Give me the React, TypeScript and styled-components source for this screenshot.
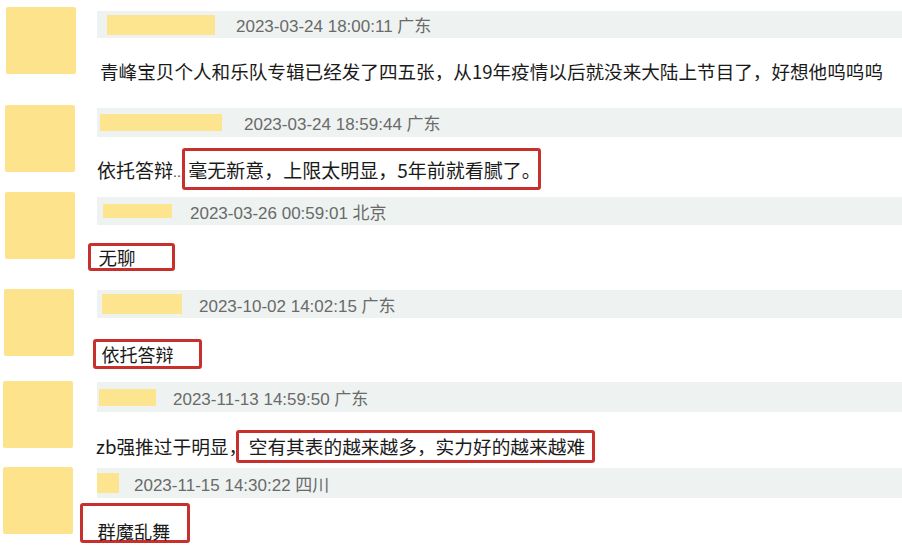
import styled, { createGlobalStyle } from "styled-components";

interface Mark {
  width: number;
  offset: number;
  padLeft: number;
  align?: "center" | "flex-end";
}

interface CommentItem {
  id: number;
  height: number;
  avatarX: number;
  avatarY: number;
  barTop: number;
  barHeight: number;
  nameX: number;
  nameWidth: number;
  nameHeight: number;
  timeGap: number;
  time: string;
  gap: number;
  lineHeight: number;
  indent: number;
  size: number;
  prefix?: string;
  dots?: boolean;
  text: string;
  mark?: Mark;
}

const comments: CommentItem[] = [
  {
    id: 1,
    height: 95,
    avatarX: 6,
    avatarY: 7,
    barTop: 11,
    barHeight: 27,
    nameX: 10,
    nameWidth: 108,
    nameHeight: 20,
    timeGap: 21,
    time: "2023-03-24 18:00:11 广东",
    gap: 18,
    lineHeight: 30,
    indent: 23,
    size: 18.6,
    text: "青峰宝贝个人和乐队专辑已经发了四五张，从19年疫情以后就没来大陆上节目了，好想他呜呜呜",
  },
  {
    id: 2,
    height: 93,
    avatarX: 5,
    avatarY: 10,
    barTop: 13,
    barHeight: 29,
    nameX: 3,
    nameWidth: 122,
    nameHeight: 17,
    timeGap: 22,
    time: "2023-03-24 18:59:44 广东",
    gap: 11,
    lineHeight: 42,
    indent: 20,
    size: 19,
    prefix: "依托答辩",
    dots: true,
    text: "毫无新意，上限太明显，5年前就看腻了。",
    mark: { width: 359, offset: -3, padLeft: 3.5 },
  },
  {
    id: 3,
    height: 97,
    avatarX: 5,
    avatarY: 4,
    barTop: 9,
    barHeight: 28,
    nameX: 6,
    nameWidth: 69,
    nameHeight: 14,
    timeGap: 18,
    time: "2023-03-26 00:59:01 北京",
    gap: 18,
    lineHeight: 28,
    indent: 11,
    size: 18.5,
    text: "无聊",
    mark: { width: 87, offset: 0, padLeft: 7.5 },
  },
  {
    id: 4,
    height: 90,
    avatarX: 4,
    avatarY: 4,
    barTop: 5,
    barHeight: 28,
    nameX: 5,
    nameWidth: 80,
    nameHeight: 20,
    timeGap: 17,
    time: "2023-10-02 14:02:15 广东",
    gap: 21,
    lineHeight: 30,
    indent: 16,
    size: 18,
    text: "依托答辩",
    mark: { width: 109, offset: 0, padLeft: 5.5 },
  },
  {
    id: 5,
    height: 87,
    avatarX: 3,
    avatarY: 6,
    barTop: 7,
    barHeight: 30,
    nameX: 2,
    nameWidth: 57,
    nameHeight: 17,
    timeGap: 17,
    time: "2023-11-13 14:59:50 广东",
    gap: 18,
    lineHeight: 33,
    indent: 19,
    size: 18.7,
    prefix: "zb强推过于明显，",
    text: "空有其表的越来越多，实力好的越来越难",
    mark: { width: 359, offset: -11, padLeft: 9.5 },
  },
  {
    id: 6,
    height: 84,
    avatarX: 3,
    avatarY: 5,
    barTop: 6,
    barHeight: 30,
    nameX: 0,
    nameWidth: 22,
    nameHeight: 20,
    timeGap: 15,
    time: "2023-11-15 14:30:22 四川",
    gap: 5,
    lineHeight: 40,
    indent: 3,
    size: 18.2,
    text: "群魔乱舞",
    mark: { width: 110, offset: 0, padLeft: 14.5, align: "flex-end" },
  },
];

export default function App() {
  return (
    <>
      <GlobalStyle />
      <List>
        {comments.map((c) => (
          <Row key={c.id} $height={c.height}>
            <AvatarCol>
              <Avatar $x={c.avatarX} $y={c.avatarY} />
            </AvatarCol>
            <Body $top={c.barTop}>
              <Bar $height={c.barHeight} $pad={c.nameX}>
                <NameBlock $width={c.nameWidth} $height={c.nameHeight} />
                <Time $gap={c.timeGap}>{c.time}</Time>
              </Bar>
              <CommentLine
                $gap={c.gap}
                $height={c.lineHeight}
                $indent={c.indent}
                $size={c.size}
              >
                {c.prefix && <span>{c.prefix}</span>}
                {c.dots && <Dots>...</Dots>}
                {c.mark ? (
                  <Highlight
                    $width={c.mark.width}
                    $offset={c.mark.offset}
                    $padLeft={c.mark.padLeft}
                    $align={c.mark.align || "center"}
                  >
                    <span>{c.text}</span>
                  </Highlight>
                ) : (
                  <span>{c.text}</span>
                )}
              </CommentLine>
            </Body>
          </Row>
        ))}
      </List>
    </>
  );
}

const GlobalStyle = createGlobalStyle`
  html, body {
    margin: 0;
    padding: 0;
    background: #ffffff;
  }

  #root {
    width: 902px;
    height: 546px;
    overflow: hidden;
  }
`;

const List = styled.div`
  display: flex;
  flex-direction: column;
  width: 902px;
  background: #ffffff;
`;

const Row = styled.div<{ $height: number }>`
  display: flex;
  height: ${(p) => p.$height}px;
  flex-shrink: 0;
`;

const AvatarCol = styled.div`
  width: 77px;
  flex-shrink: 0;
`;

const Avatar = styled.div<{ $x: number; $y: number }>`
  width: 70px;
  height: 67px;
  margin-left: ${(p) => p.$x}px;
  margin-top: ${(p) => p.$y}px;
  background: #fde38b;
  border-radius: 2px;
`;

const Body = styled.div<{ $top: number }>`
  flex: 1;
  display: flex;
  flex-direction: column;
  padding-top: ${(p) => p.$top}px;
  min-width: 0;
`;

const Bar = styled.div<{ $height: number; $pad: number }>`
  display: flex;
  align-items: center;
  height: ${(p) => p.$height}px;
  margin-left: 20px;
  padding-left: ${(p) => p.$pad}px;
  background: #eef2f1;
  flex-shrink: 0;
`;

const NameBlock = styled.div<{ $width: number; $height: number }>`
  width: ${(p) => p.$width}px;
  height: ${(p) => p.$height}px;
  background: #fde48e;
  flex-shrink: 0;
`;

const Time = styled.span<{ $gap: number }>`
  margin-left: ${(p) => p.$gap}px;
  font-family: "Liberation Sans", "Noto Sans CJK SC", sans-serif;
  font-size: 17px;
  color: #6a6a6a;
  white-space: nowrap;
`;

const CommentLine = styled.div<{
  $gap: number;
  $height: number;
  $indent: number;
  $size: number;
}>`
  display: flex;
  align-items: center;
  height: ${(p) => p.$height}px;
  margin-top: ${(p) => p.$gap}px;
  padding-left: ${(p) => p.$indent}px;
  font-family: "Noto Sans CJK SC", sans-serif;
  font-size: ${(p) => p.$size}px;
  line-height: 1;
  color: #1a1a1a;
  white-space: nowrap;
  flex-shrink: 0;
`;

const Dots = styled.span`
  font-family: "Liberation Sans", sans-serif;
  font-size: 14px;
  align-self: center;
  padding-top: 6px;
  color: #444;
`;

const Highlight = styled.div<{
  $width: number;
  $offset: number;
  $padLeft: number;
  $align: string;
}>`
  box-sizing: border-box;
  display: flex;
  align-items: ${(p) => p.$align};
  width: ${(p) => p.$width}px;
  height: 100%;
  margin-left: ${(p) => p.$offset}px;
  padding-left: ${(p) => p.$padLeft}px;
  border: 3px solid #c8302d;
  border-radius: 3px;
  flex-shrink: 0;
`;
